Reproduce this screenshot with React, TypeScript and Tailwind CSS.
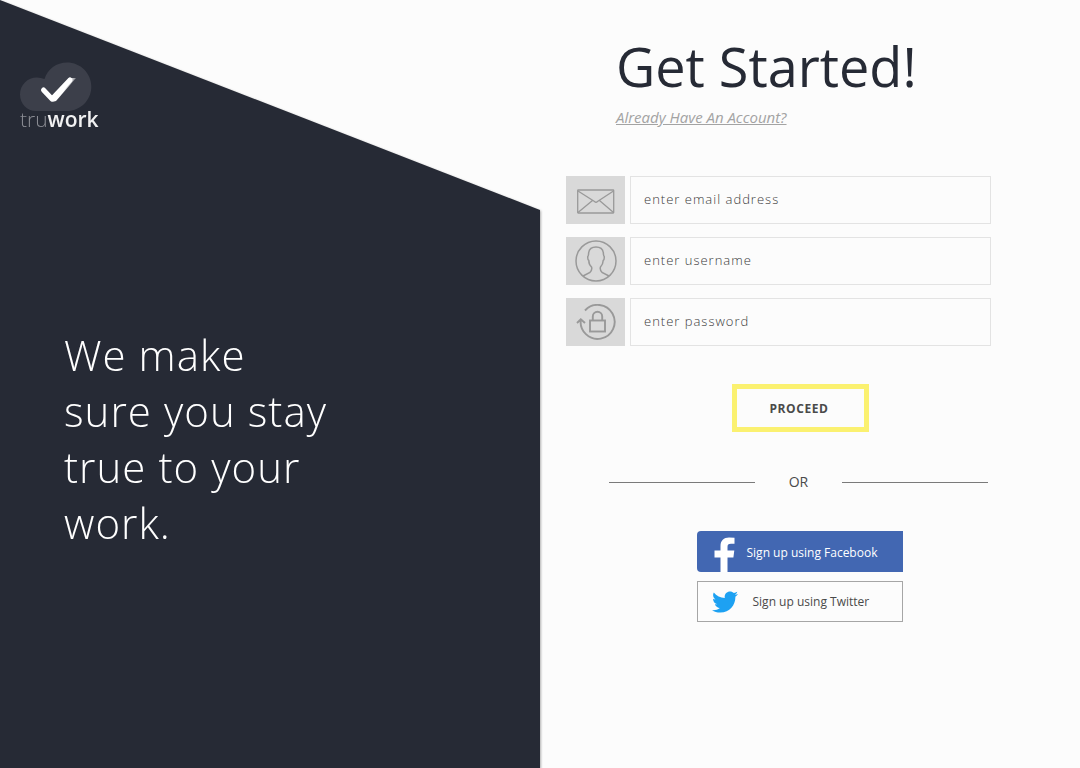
import type { ReactNode } from "react";
import { FaTwitter } from "react-icons/fa";

function Logo() {
  return (
    <a href="#home" aria-label="truwork home" className="block w-fit">
      <svg viewBox="0 0 72 49" className="block h-[49px] w-[72px]" aria-hidden="true">
        <defs>
          <linearGradient id="tick" gradientUnits="userSpaceOnUse" x1="44" y1="22" x2="55" y2="27">
            <stop offset="0.2" stopColor="#ffffff" />
            <stop offset="1" stopColor="#3c3f4a" />
          </linearGradient>
        </defs>
        <path
          d="M16 49C7 49 0 41.500 0 32.500C0 23 7.500 15.500 17 15.500C19.500 15.500 22 16 24.500 17C27.500 7 36.500 0.500 47 0.500C60.500 0.500 71.300 11.300 71.300 24.700C71.300 38 60.500 49 47 49Z"
          fill="#3c3f4a"
        />
        <path d="M32 40L36 39L56 16H49Z" fill="url(#tick)" />
        <path d="M23.500 28L32 37L50 18" fill="none" stroke="#fff" strokeWidth="5" strokeLinecap="round" strokeLinejoin="round" />
      </svg>
      <span className="block text-[21px] leading-4">
        <span className="font-light text-[#8b8d94]">tru</span>
        <span className="font-semibold text-[#f1f1f2]">work</span>
      </span>
    </a>
  );
}

function MailIcon() {
  return (
    <svg viewBox="0 0 38 27" className="h-[27px] w-[38px]" fill="none" stroke="#999" strokeWidth="1.3" aria-hidden="true">
      <rect x="0.700" y="3" width="36" height="23" rx="0.5" />
      <path d="M1 4L17.500 14.500Q19 16 20.500 14.500L36.500 4M1 25.500L15.500 13.500M36.500 25.500L22.500 13.500" />
    </svg>
  );
}

function UserIcon() {
  return (
    <svg viewBox="0 0 42 42" className="h-[42px] w-[42px]" fill="none" stroke="#999" strokeWidth="1.5" aria-hidden="true">
      <circle cx="21" cy="21" r="20" />
      <path d="M8 36L15 32.300Q17.500 29.500 16.500 27Q13.800 24.500 13.800 20.500Q12.500 20 12.800 16.500Q13.500 16 13.700 12.500Q14.500 7 21 7Q27.500 7 28.300 12.500Q28.500 16 29.200 16.500Q29.500 20 28.200 20.500Q28 24.500 25.500 27Q24.500 29.500 27 32.300L34 36" />
    </svg>
  );
}

function PasswordIcon() {
  return (
    <svg viewBox="0 0 40 36" className="h-9 w-10" fill="none" stroke="#999" strokeWidth="1.9" aria-hidden="true">
      <path d="M9 6.500A17 17 0 1 1 4.800 15.500M1 19L4.800 15.300L9 19" />
      <rect x="14" y="16.500" width="15" height="11" />
      <path d="M16.800 16.500V12.500A4.700 4.700 0 0 1 26.200 12.500V16.500" />
    </svg>
  );
}

function Field({ id, type, label, icon }: { id: string; type: string; label: string; icon: ReactNode }) {
  return (
    <div className="flex h-12 gap-[5px]">
      <label htmlFor={id} aria-label={label} className="flex w-[59px] shrink-0 items-center justify-center bg-[#d9d9d9]">
        {icon}
      </label>
      <input
        id={id}
        name={id}
        type={type}
        placeholder={label}
        className="min-w-0 flex-1 border border-[#e3e3e3] bg-transparent px-[13px] text-[13px] font-light tracking-[1px] text-[#3a3a3a] outline-none placeholder:text-[#3a3a3a]"
      />
    </div>
  );
}

export default function App() {
  return (
    <main className="grid min-h-screen grid-cols-2 bg-[#fcfcfc] font-['Open_Sans','Noto_Sans',sans-serif]">
      <div className="grid drop-shadow-[1px_1px_1px_rgba(0,0,0,0.3)]">
        <section className="bg-[#262a35] [clip-path:polygon(0_0,100%_210px,100%_100%,0_100%)]">
          <div className="pt-[62px] pl-5">
            <Logo />
          </div>
          <p className="mt-[200px] ml-16 w-[270px] text-[42px] leading-14 font-light tracking-wide text-white">
            We make sure you stay true to your work.
          </p>
        </section>
      </div>

      <section className="pt-[30px] pr-[89px] pl-[26px]">
        <header className="pl-[50px]">
          <h1 className="text-[54px] leading-[73px] text-[#262a35]">Get Started!</h1>
          <a href="#login" className="mt-1 block w-fit text-[15px] leading-5 text-[#a3a3a3] italic underline">
            Already Have An Account?
          </a>
        </header>

        <form className="mt-[49px]" onSubmit={(event) => event.preventDefault()}>
          <div className="flex flex-col gap-[13px]">
            <Field id="email" type="email" label="enter email address" icon={<MailIcon />} />
            <Field id="username" type="text" label="enter username" icon={<UserIcon />} />
            <Field id="password" type="password" label="enter password" icon={<PasswordIcon />} />
          </div>
          <div className="mt-[38px] flex justify-center pl-11">
            <button type="submit" className="h-12 w-[137px] border-5 border-[#fbf170] pt-px pr-[3px] text-xs font-bold tracking-wider text-[#4a4a4a]">
              PROCEED
            </button>
          </div>
        </form>

        <div className="mt-10 flex items-center gap-[34px] pr-[3px] pl-[43px] text-sm leading-5 text-[#4a4a4a]">
          <span className="h-px flex-1 bg-[#7a7a7a]" />
          <span>OR</span>
          <span className="h-px flex-1 bg-[#7a7a7a]" />
        </div>

        <div className="mt-[39px] flex flex-col items-center gap-[9px] pl-[42px] text-xs">
          <button type="button" className="flex h-[41px] w-[206px] items-center rounded-l-sm bg-[#4267b2] pt-[3px] pl-[17px] text-white">
            <svg viewBox="0 0 21 35" className="mr-3 h-[35px] w-[21px] self-end" fill="#fff" aria-hidden="true">
              <path d="M6.500 35V20.500H0.500V13.500H6.500V9C6.500 3.500 9.800 0.500 15 0.500Q18 0.500 20.500 0.800V6.800H17C14.200 6.800 13.500 8 13.500 10V13.500H20.300L19.400 20.500H13.500V35Z" />
            </svg>
            <span>Sign up using Facebook</span>
          </button>
          <button type="button" className="flex h-[41px] w-[206px] items-center gap-[15px] border border-[#a6a6a6] pl-[14px] text-[#4a4a4a]">
            <FaTwitter className="size-[26px] text-[#1da1f2]" aria-hidden="true" />
            <span>Sign up using Twitter</span>
          </button>
        </div>
      </section>
    </main>
  );
}
